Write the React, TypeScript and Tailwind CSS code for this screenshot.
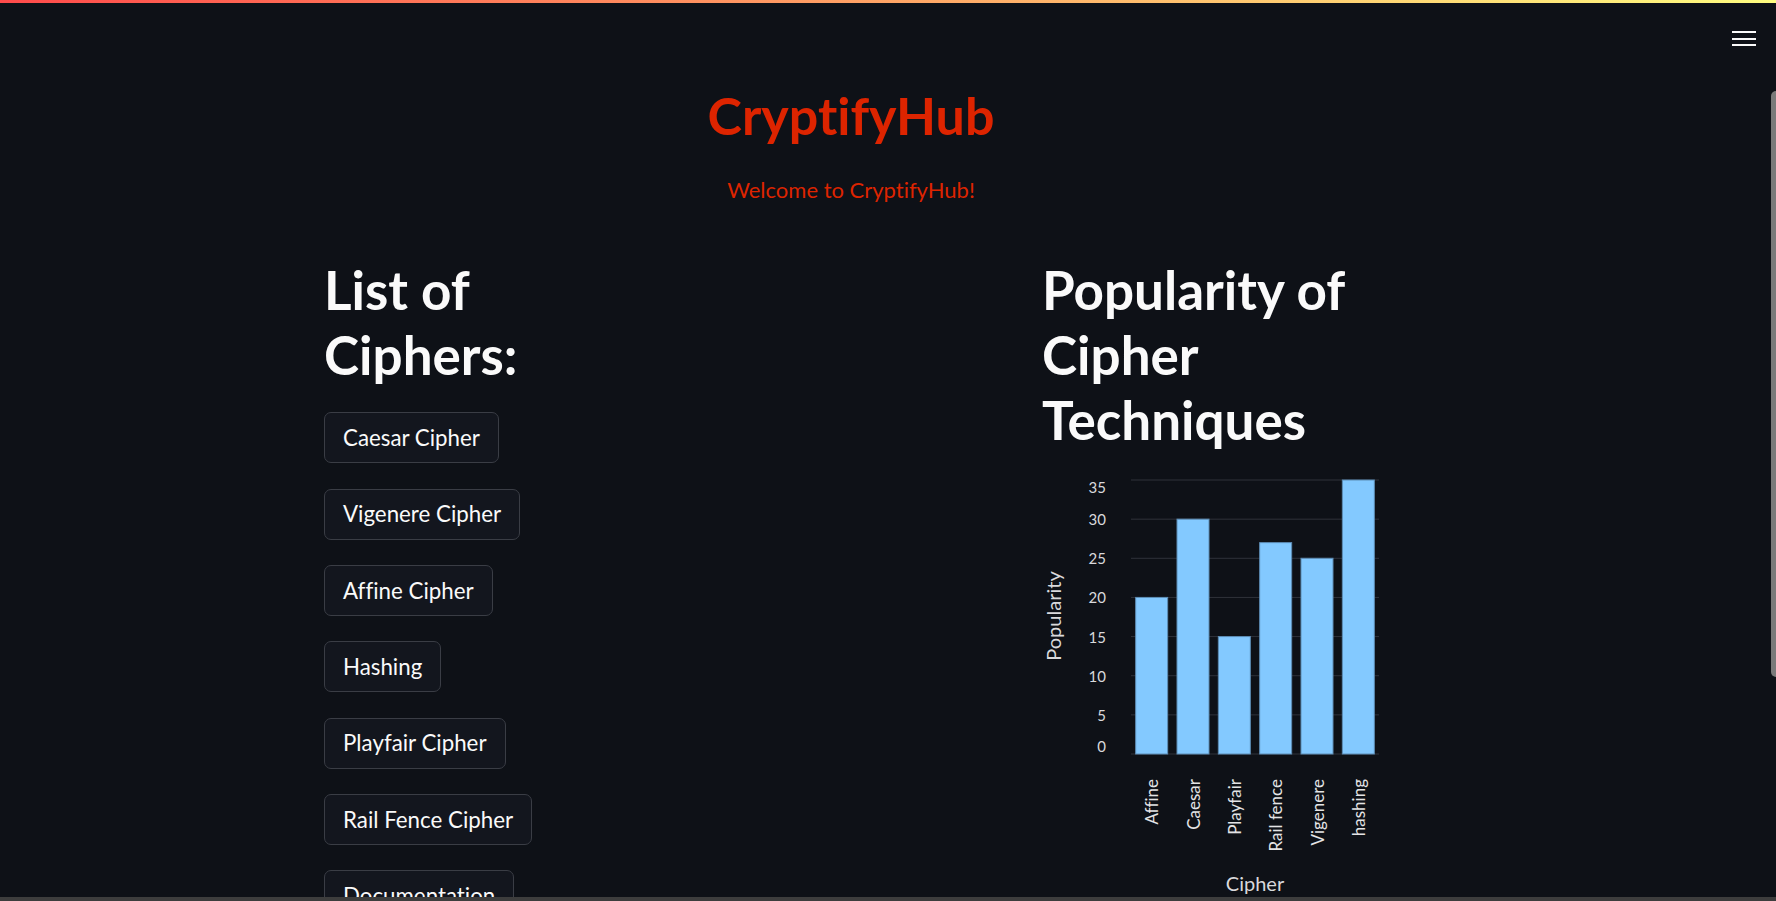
import { useState } from "react";

const ciphers = [
  "Caesar Cipher",
  "Vigenere Cipher",
  "Affine Cipher",
  "Hashing",
  "Playfair Cipher",
  "Rail Fence Cipher",
  "Documentation",
];

const popularity = [
  { name: "Affine", value: 20 },
  { name: "Caesar", value: 30 },
  { name: "Playfair", value: 15 },
  { name: "Rail fence", value: 27 },
  { name: "Vigenere", value: 25 },
  { name: "hashing", value: 35 },
];

// chart geometry, in svg coords (svg sits at page x=1043, y=460)
const X0 = 89;
const X1 = 337;
const Y_ZERO = 295;
const PER_UNIT = 274 / 35;
const BAND = (X1 - X0) / popularity.length;
const BAR_W = 32;

function PopularityChart() {
  const ticks = [0, 5, 10, 15, 20, 25, 30, 35];
  const y = (v: number) => Y_ZERO - v * PER_UNIT;

  return (
    <svg
      width={345}
      height={440}
      className="overflow-visible [font-variant-ligatures:none]"
      style={{ fontFamily: "Lato, sans-serif" }}
    >
      {ticks.map((t) => (
        <line key={t} x1={X0} x2={X1} y1={y(t)} y2={y(t)} stroke="#2f323a" strokeWidth={1} />
      ))}
      {ticks.map((t, i) => (
        <text
          key={`l${t}`}
          x={64}
          y={y(t)}
          textAnchor="end"
          dominantBaseline={i === 0 ? "auto" : i === ticks.length - 1 ? "hanging" : "central"}
          dy={i === 0 ? -2 : i === ticks.length - 1 ? 1 : 0}
          fontSize={15}
          fill="#d9d9dc"
        >
          {t}
        </text>
      ))}
      <text
        transform={`translate(11,157) rotate(-90)`}
        textAnchor="middle"
        dominantBaseline="central"
        fontSize={20}
        fill="#d9d9dc"
      >
        Popularity
      </text>

      {popularity.map((p, i) => {
        const cx = X0 + BAND * i + BAND / 2;
        return (
          <g key={p.name}>
            <rect
              x={cx - BAR_W / 2}
              y={y(p.value)}
              width={BAR_W}
              height={Y_ZERO - y(p.value)}
              fill="#83c9ff"
              stroke="#5d8db5"
              strokeWidth={1}
            />
            <text
              transform={`translate(${cx},320) rotate(-90)`}
              textAnchor="end"
              dominantBaseline="central"
              fontSize={17}
              fill="#e4e4e6"
            >
              {p.name}
            </text>
          </g>
        );
      })}

      <text x={(X0 + X1) / 2} y={432} textAnchor="middle" fontSize={20} fill="#d9d9dc">
        Cipher
      </text>
    </svg>
  );
}

export default function App() {
  const [selected, setSelected] = useState<string | null>(null);

  return (
    <div className="relative h-screen w-full overflow-hidden bg-[#0e1117] font-['Lato',sans-serif] text-[#fafafa] [font-variant-ligatures:none]">
      <div className="absolute inset-x-0 top-0 h-[3px] bg-[linear-gradient(90deg,#ff4b4b,#fffd80)]" />

      <button type="button" className="absolute right-[20px] top-[31px] flex w-[24px] flex-col gap-[4.5px]">
        <span className="block h-[2px] w-full bg-[#fafafa]" />
        <span className="block h-[2px] w-full bg-[#fafafa]" />
        <span className="block h-[2px] w-full bg-[#fafafa]" />
      </button>

      <main className="ml-[324px] w-[1054px] pt-[84px]">
        <h1 className="text-center text-[52px] font-bold leading-[1.2] text-[#dd2400]">CryptifyHub</h1>
        <p className="mt-[31px] text-center text-[22px] leading-[26px] text-[#dd2400]">Welcome to CryptifyHub!</p>

        <div className="mt-[54px] grid grid-cols-[335px_335px_335px] gap-x-[24px]">
          <section>
            <h2 className="text-[53px] font-bold leading-[65px]">List of Ciphers:</h2>
            <div className="mt-[25px] flex flex-col items-start gap-[25.3px]">
              {ciphers.map((c) => (
                <button
                  key={c}
                  type="button"
                  onClick={() => setSelected(c)}
                  className={`flex h-[51px] items-center rounded-[7px] border bg-[#13161e] px-[18px] text-[22.3px] text-[#fafafa] ${
                    selected === c ? "border-[#ff4b4b]" : "border-[#3a3d45]"
                  }`}
                >
                  {c}
                </button>
              ))}
            </div>
          </section>

          <section />

          <section>
            <h2 className="text-[53px] font-bold leading-[65px]">Popularity of Cipher Techniques</h2>
            <div className="mt-[7px]">
              <PopularityChart />
            </div>
          </section>
        </div>
      </main>

      <div className="absolute right-0 top-[91px] h-[586px] w-[5px] rounded-l-full bg-[#7a7a7a]" />
      <div className="absolute inset-x-0 bottom-0 h-[4px] bg-[#3d3d3d]" />
    </div>
  );
}
